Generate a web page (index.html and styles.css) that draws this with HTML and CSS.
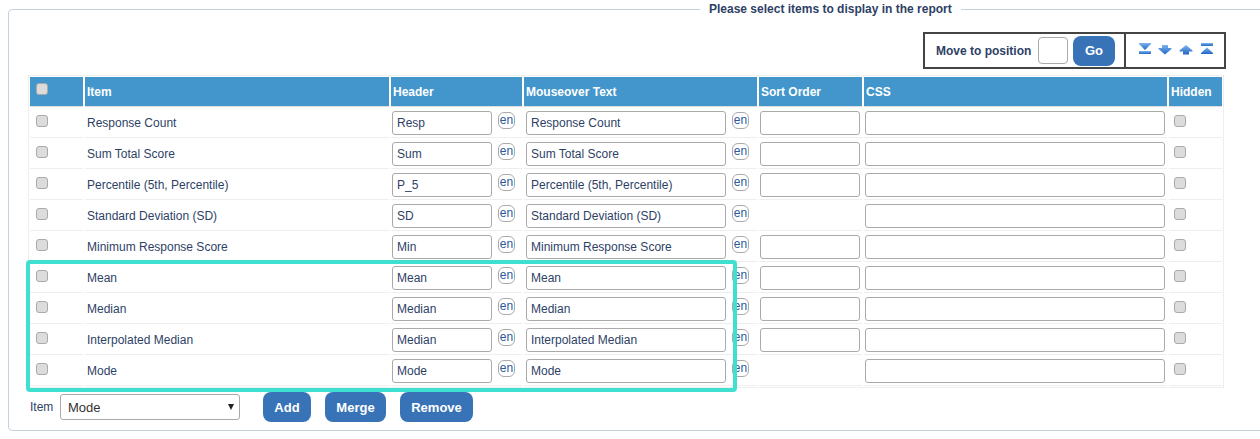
FILE: index.html
```html
<!DOCTYPE html>
<html lang="en">
<head>
<meta charset="utf-8">
<title>Report items</title>
<link rel="stylesheet" href="styles.css">
</head>
<body>
<svg class="defs" width="0" height="0" aria-hidden="true"><defs><linearGradient id="blue" x1="0" y1="0" x2="0" y2="1"><stop offset="0" stop-color="#7fb4ee"/><stop offset="1" stop-color="#1f66c4"/></linearGradient></defs></svg>
<fieldset class="panel">
  <legend class="panel-title">Please select items to display in the report</legend>
  <div class="toolbar-row">
    <div class="toolbar">
      <div class="move-group">
        <label class="move-label">Move to position</label>
        <input class="move-input" type="text">
        <button class="btn go">Go</button>
      </div>
      <div class="arrow-group">
        <svg class="arrow" width="12" height="12" viewBox="0 0 12 12"><path class="tri" d="M0 0H12V1L6 7L0 1Z"/><rect class="bar" x="0" y="8" width="12" height="3"/></svg>
        <svg class="arrow" width="14" height="12" viewBox="0 0 14 12"><path class="tri" d="M4 2H10V5H13.500V6L7 11.500L0.500 6V5H4Z"/></svg>
        <svg class="arrow" width="14" height="12" viewBox="0 0 14 12"><path class="tri" d="M7 2L13.500 7.500V8.500H10V11.500H4V8.500H0.500V7.500Z"/></svg>
        <svg class="arrow last" width="12" height="12" viewBox="0 0 12 12"><rect class="bar" x="0" y="0" width="12" height="3"/><path class="tri" d="M6 4.500L12 10V11H0V10Z"/></svg>
      </div>
    </div>
  </div>
  <div class="table-wrap">
    <table class="items">
      <thead>
        <tr>
          <th class="c-check"><input class="check" type="checkbox"></th>
          <th class="c-item">Item</th>
          <th class="c-header">Header</th>
          <th class="c-mouse">Mouseover Text</th>
          <th class="c-sort">Sort Order</th>
          <th class="c-css">CSS</th>
          <th class="c-hidden">Hidden</th>
        </tr>
      </thead>
      <tbody>
        <tr><td class="c-check"><input class="check" type="checkbox"></td><td class="c-item">Response Count</td><td class="tight"><div class="lang"><input class="field w100" type="text" value="Resp"><button class="en">en</button></div></td><td><div class="lang"><input class="field w200" type="text" value="Response Count"><button class="en">en</button></div></td><td class="tight"><input class="field w100" type="text"></td><td class="tight"><input class="field w300" type="text"></td><td class="c-hidden"><input class="check" type="checkbox"></td></tr>
        <tr><td class="c-check"><input class="check" type="checkbox"></td><td class="c-item">Sum Total Score</td><td class="tight"><div class="lang"><input class="field w100" type="text" value="Sum"><button class="en">en</button></div></td><td><div class="lang"><input class="field w200" type="text" value="Sum Total Score"><button class="en">en</button></div></td><td class="tight"><input class="field w100" type="text"></td><td class="tight"><input class="field w300" type="text"></td><td class="c-hidden"><input class="check" type="checkbox"></td></tr>
        <tr><td class="c-check"><input class="check" type="checkbox"></td><td class="c-item">Percentile (5th, Percentile)</td><td class="tight"><div class="lang"><input class="field w100" type="text" value="P_5"><button class="en">en</button></div></td><td><div class="lang"><input class="field w200" type="text" value="Percentile (5th, Percentile)"><button class="en">en</button></div></td><td class="tight"><input class="field w100" type="text"></td><td class="tight"><input class="field w300" type="text"></td><td class="c-hidden"><input class="check" type="checkbox"></td></tr>
        <tr><td class="c-check"><input class="check" type="checkbox"></td><td class="c-item">Standard Deviation (SD)</td><td class="tight"><div class="lang"><input class="field w100" type="text" value="SD"><button class="en">en</button></div></td><td><div class="lang"><input class="field w200" type="text" value="Standard Deviation (SD)"><button class="en">en</button></div></td><td class="tight"></td><td class="tight"><input class="field w300" type="text"></td><td class="c-hidden"><input class="check" type="checkbox"></td></tr>
        <tr><td class="c-check"><input class="check" type="checkbox"></td><td class="c-item">Minimum Response Score</td><td class="tight"><div class="lang"><input class="field w100" type="text" value="Min"><button class="en">en</button></div></td><td><div class="lang"><input class="field w200" type="text" value="Minimum Response Score"><button class="en">en</button></div></td><td class="tight"><input class="field w100" type="text"></td><td class="tight"><input class="field w300" type="text"></td><td class="c-hidden"><input class="check" type="checkbox"></td></tr>
        <tr><td class="c-check"><input class="check" type="checkbox"></td><td class="c-item">Mean</td><td class="tight"><div class="lang"><input class="field w100" type="text" value="Mean"><button class="en">en</button></div></td><td><div class="lang"><input class="field w200" type="text" value="Mean"><button class="en">en</button></div></td><td class="tight"><input class="field w100" type="text"></td><td class="tight"><input class="field w300" type="text"></td><td class="c-hidden"><input class="check" type="checkbox"></td></tr>
        <tr><td class="c-check"><input class="check" type="checkbox"></td><td class="c-item">Median</td><td class="tight"><div class="lang"><input class="field w100" type="text" value="Median"><button class="en">en</button></div></td><td><div class="lang"><input class="field w200" type="text" value="Median"><button class="en">en</button></div></td><td class="tight"><input class="field w100" type="text"></td><td class="tight"><input class="field w300" type="text"></td><td class="c-hidden"><input class="check" type="checkbox"></td></tr>
        <tr><td class="c-check"><input class="check" type="checkbox"></td><td class="c-item">Interpolated Median</td><td class="tight"><div class="lang"><input class="field w100" type="text" value="Median"><button class="en">en</button></div></td><td><div class="lang"><input class="field w200" type="text" value="Interpolated Median"><button class="en">en</button></div></td><td class="tight"><input class="field w100" type="text"></td><td class="tight"><input class="field w300" type="text"></td><td class="c-hidden"><input class="check" type="checkbox"></td></tr>
        <tr><td class="c-check"><input class="check" type="checkbox"></td><td class="c-item">Mode</td><td class="tight"><div class="lang"><input class="field w100" type="text" value="Mode"><button class="en">en</button></div></td><td><div class="lang"><input class="field w200" type="text" value="Mode"><button class="en">en</button></div></td><td class="tight"></td><td class="tight"><input class="field w300" type="text"></td><td class="c-hidden"><input class="check" type="checkbox"></td></tr>
      </tbody>
    </table>
    <div class="highlight"></div>
  </div>
  <div class="add-row">
    <label class="add-label">Item</label>
    <div class="select-wrap">
      <select class="select"><option>Mode</option></select>
    </div>
    <div class="add-buttons">
      <button class="btn add">Add</button>
      <button class="btn merge">Merge</button>
      <button class="btn remove">Remove</button>
    </div>
  </div>
</fieldset>
</body>
</html>
```
FILE: styles.css
```css
html, body {
  margin: 0;
  padding: 0;
  height: 439px;
  overflow: hidden;
  background: #fff;
}
body, input, select, button {
  font-family: "Liberation Sans", Arial, sans-serif;
  font-size: 12px;
  color: #2e3f66;
}
.defs {
  display: block;
  height: 0;
}
.panel {
  box-sizing: border-box;
  width: 1300px;
  height: 429px;
  margin: 2px 0 0 8px;
  padding: 0;
  border: 1px solid #c3d2de;
  border-radius: 4px;
}
.panel-title {
  margin-left: 691px;
  padding: 0 9px;
  font-weight: bold;
  line-height: 14px;
}
.toolbar-row {
  display: flex;
  justify-content: flex-end;
  box-sizing: border-box;
  width: 1217px;
  margin-top: 16px;
}
.toolbar {
  display: flex;
  box-sizing: border-box;
  height: 37px;
  border: 2px solid #444;
}
.move-group {
  display: flex;
  align-items: center;
  width: 201px;
  box-sizing: border-box;
  padding-left: 11px;
  border-right: 2px solid #444;
}
.move-label {
  font-weight: bold;
  width: 102px;
  white-space: nowrap;
}
.move-input {
  box-sizing: border-box;
  width: 30px;
  height: 27px;
  border: 1px solid #aaa;
  border-radius: 4px;
  padding: 0;
}
.btn {
  height: 30px;
  border: 0;
  border-radius: 8px;
  background: #3873b8;
  color: #fff;
  font-size: 13px;
  font-weight: bold;
  padding: 0;
}
.go {
  width: 42px;
  margin-left: 5px;
}
.arrow-group {
  display: flex;
  align-items: center;
  width: 98px;
  box-sizing: border-box;
  padding-left: 13px;
  padding-bottom: 4px;
  gap: 7px;
}
.arrow { display: block; flex: none; }
.arrow.last { margin-left: 1px; }
.tri { fill: url(#blue); }
.bar { fill: url(#blue); }
.table-wrap {
  position: relative;
  margin: 6px 0 0 19px;
  width: 1196px;
}
.items {
  border-collapse: separate;
  border-spacing: 2px;
  table-layout: fixed;
  width: 1196px;
  box-shadow: inset 0 0 0 1px #eee;
}
.items th {
  box-sizing: border-box;
  height: 30px;
  padding: 0 2px;
  background: #4396cc;
  border-bottom: 1px solid #ddd;
  color: #fff;
  font-weight: bold;
  text-align: left;
  vertical-align: middle;
}
.items td {
  box-sizing: border-box;
  height: 29px;
  padding: 0 2px;
  border-bottom: 1px solid #eee;
  vertical-align: middle;
}
.items td.tight { padding: 0 1px; }
.items th.c-check { width: 53px; padding: 0 6px 6px; }
.items td.c-check { padding: 0 6px 5px; }
.items .c-item { width: 304px; }
.items .c-header { width: 131px; }
.items .c-mouse { width: 233px; }
.items .c-sort { width: 103px; }
.items .c-css { width: 303px; }
.items th.c-hidden { width: 53px; }
.items td.c-hidden { padding: 0 5px 5px; }
.check {
  appearance: none;
  display: block;
  box-sizing: border-box;
  width: 12px;
  height: 12px;
  margin: 0;
  background: #dcdcdc;
  border: 1px solid #aaa;
  border-radius: 3px;
}
.lang {
  display: flex;
  align-items: flex-start;
  gap: 6px;
}
.field {
  display: block;
  box-sizing: border-box;
  height: 24px;
  margin: 0;
  padding: 0 4px;
  border: 1px solid #aaa;
  border-radius: 3px;
  background: #fff;
}
.w100 { width: 100px; }
.w200 { width: 200px; }
.w300 { width: 300px; }
.en {
  box-sizing: border-box;
  width: 17px;
  height: 17px;
  margin-top: 1px;
  padding: 0 0 3px;
  border: 1px solid #aaa;
  border-radius: 6px;
  background: #fff;
  color: #2a5a9c;
  font-size: 12px;
}
.highlight {
  position: absolute;
  box-sizing: border-box;
  left: -2px;
  top: 185px;
  width: 711px;
  height: 132px;
  border: 4px solid #40e0d0;
  border-radius: 4px;
  pointer-events: none;
}
.add-row {
  display: flex;
  align-items: center;
  margin: 4px 0 0 21px;
}
.add-label { width: 30px; }
.select-wrap {
  position: relative;
  width: 180px;
  height: 26px;
}
.select-wrap::after {
  content: "";
  position: absolute;
  right: 6px;
  top: 10px;
  border-left: 3px solid transparent;
  border-right: 3px solid transparent;
  border-top: 6px solid #222;
}
.select {
  appearance: none;
  box-sizing: border-box;
  width: 180px;
  height: 26px;
  padding: 0 7px;
  border: 1px solid #aaa;
  border-radius: 3px;
  background: #fff;
  font-size: 13px;
  color: #333;
}
.add-buttons {
  display: flex;
  gap: 14px;
  margin-left: 23px;
}
.add { width: 48px; }
.merge { width: 61px; }
.remove { width: 73px; }
```
